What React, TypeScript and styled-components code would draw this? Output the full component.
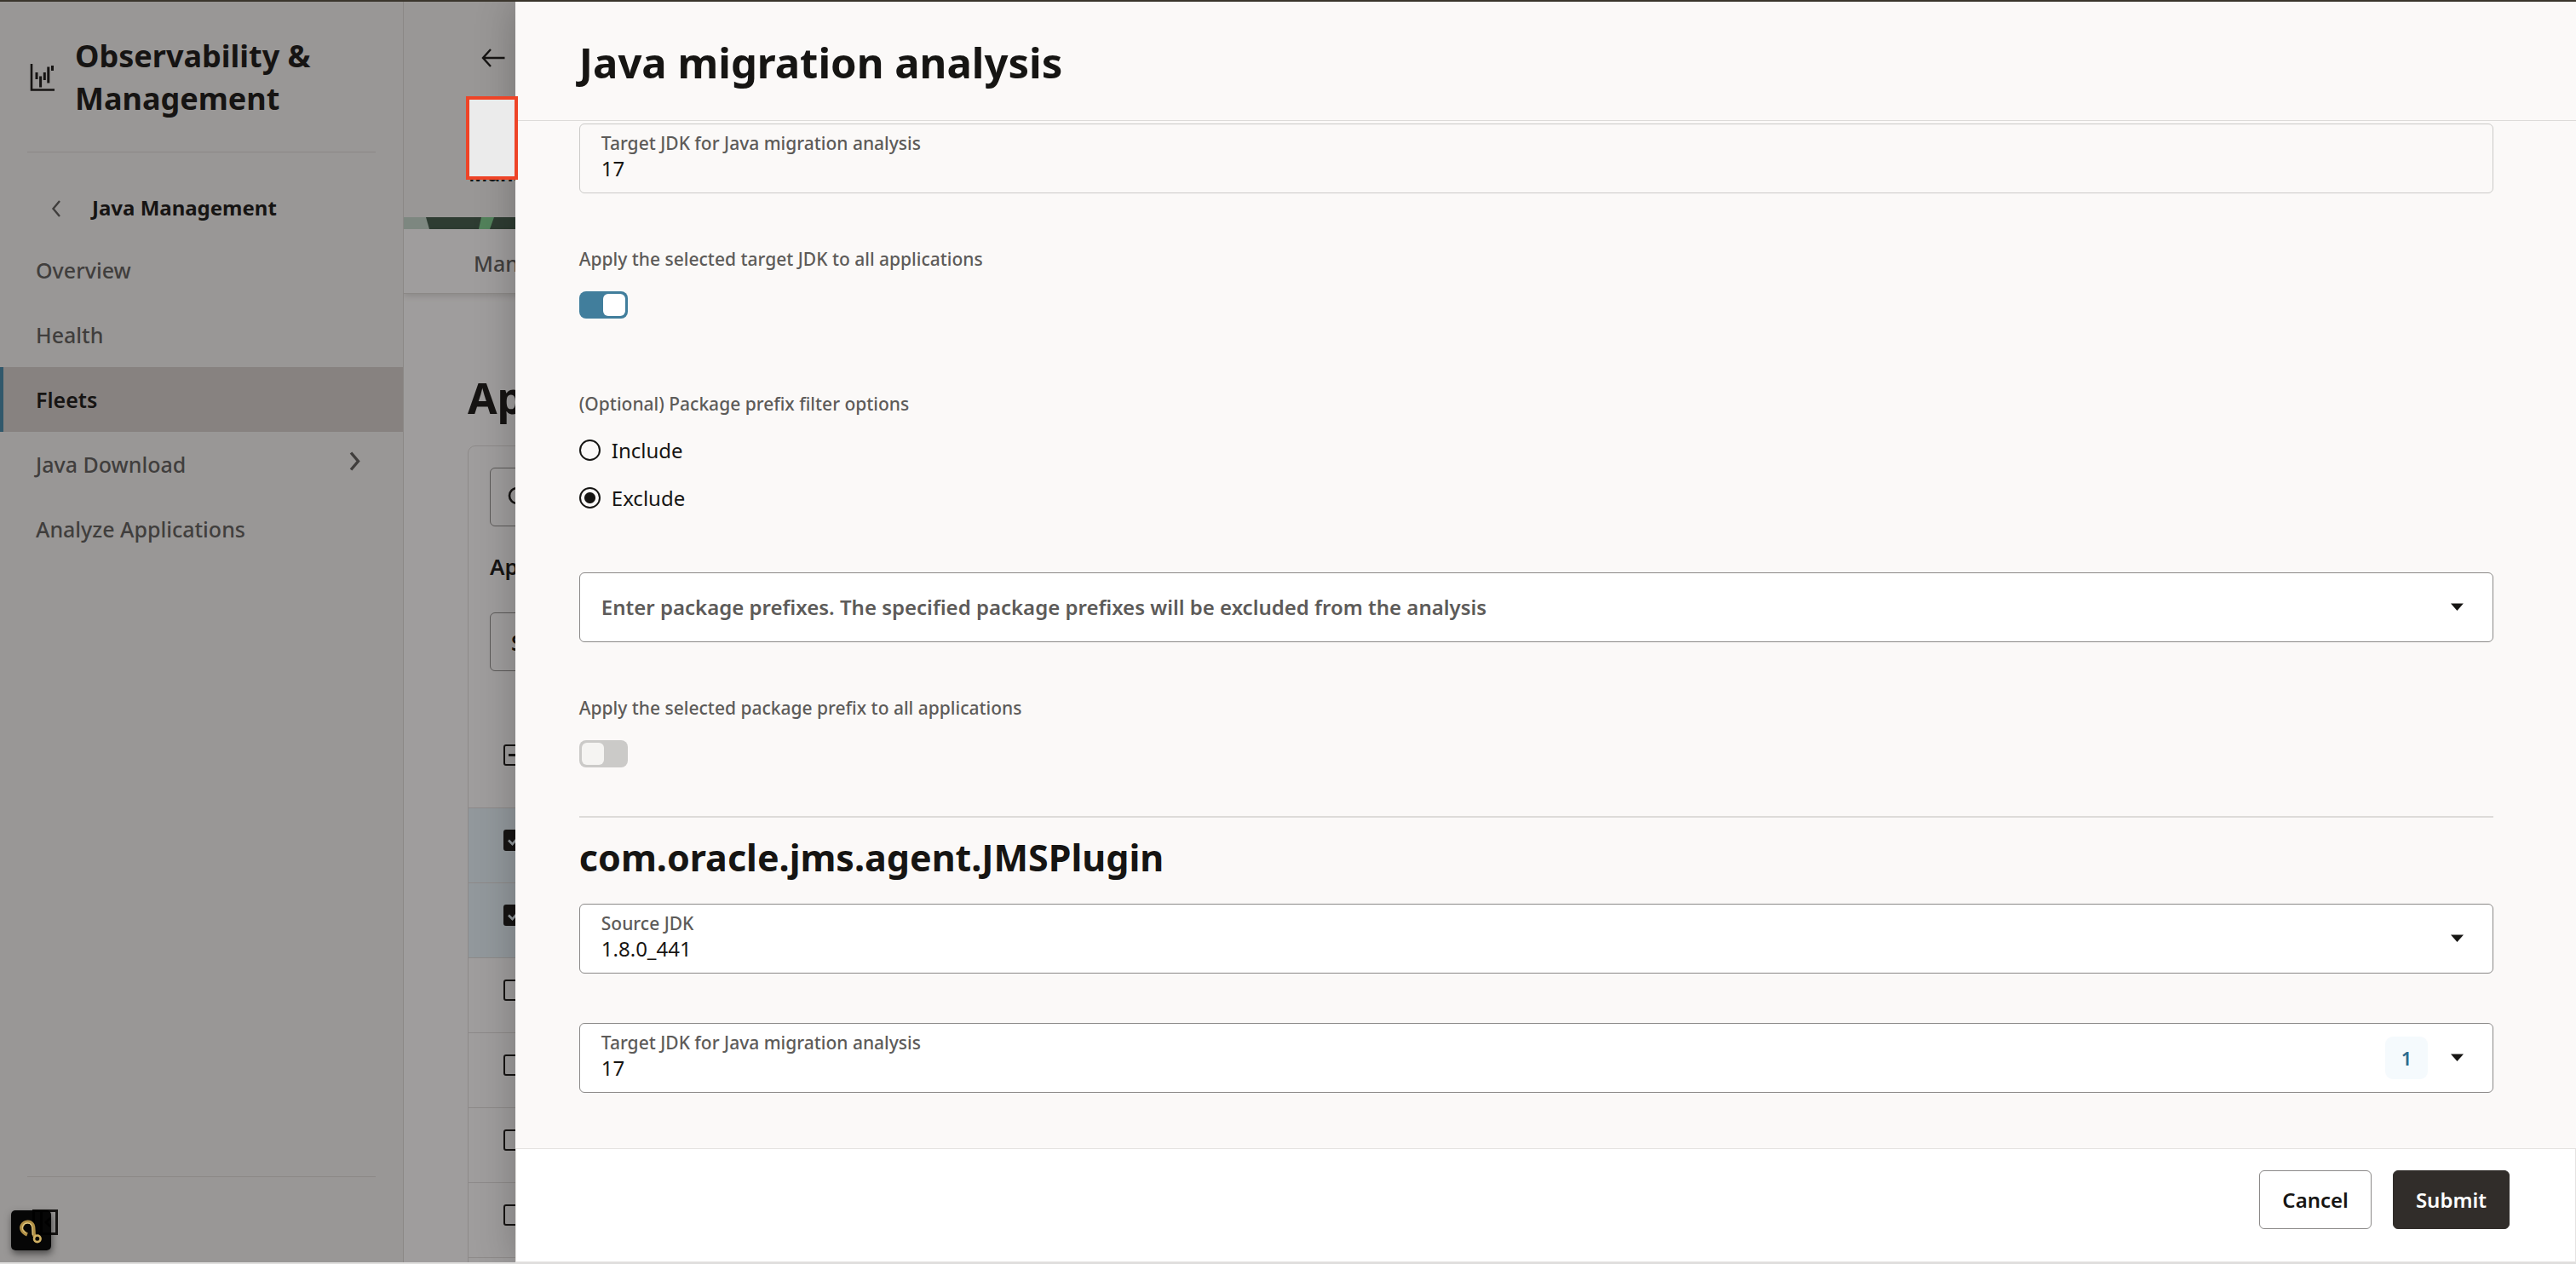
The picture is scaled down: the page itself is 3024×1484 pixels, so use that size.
import React, { useId, useState } from "react";
import styled, { createGlobalStyle, css } from "styled-components";

const ink = "#161513";
const muted = "#5d5b59";
const line = "#dddbd9";

const GlobalStyle = createGlobalStyle`
  *, *::before, *::after { box-sizing: border-box; }
  body { margin: 0; color: ${ink}; }
  body, button, input, select { font-family: "Noto Sans", "Open Sans", sans-serif; }
  h1, h2, p, fieldset, legend { margin: 0; padding: 0; }
  fieldset { border: 0; min-width: 0; }
`;

const Screen = styled.div`
  position: relative;
  display: flex;
  height: 100vh;
  overflow: hidden;
  border-top: 2px solid #3a352c;
  border-bottom: 2px solid #dfdedd;
  background: #fbf9f8;
`;

/* ---------- side navigation ---------- */

const Sidebar = styled.aside`
  display: flex;
  flex-direction: column;
  flex: 0 0 474px;
  border-right: 1px solid #d9d6d3;
  background: #f1efed;
`;

const Brand = styled.div`
  display: flex;
  align-items: center;
  gap: 20px;
  margin: 0 32px;
  padding: 39px 0 37px 2px;
  border-bottom: 1px solid #d9d6d3;
`;

const BrandName = styled.p`
  font-size: 36px;
  font-weight: 700;
  line-height: 50px;
`;

const BackLink = styled.a`
  display: flex;
  align-items: center;
  gap: 34px;
  padding: 48px 32px 18px 58px;
  color: inherit;
  font-size: 24px;
  font-weight: 700;
  line-height: 34px;
  text-decoration: none;
`;

const NavItem = styled.a<{ $active?: boolean }>`
  display: flex;
  align-items: center;
  justify-content: space-between;
  height: 76px;
  padding: 0 48px 0 38px;
  border-left: 4px solid ${(p) => (p.$active ? "#4385a6" : "transparent")};
  background: ${(p) => (p.$active ? "#d2cbc9" : "transparent")};
  color: ${(p) => (p.$active ? ink : muted)};
  font-size: 25px;
  font-weight: ${(p) => (p.$active ? 600 : 500)};
  text-decoration: none;
`;

const SidebarFooter = styled.div`
  margin: auto 32px 0;
  padding: 38px 0 32px 6px;
  border-top: 1px solid #d9d6d3;
`;

const IconButton = styled.button<{ $size: number }>`
  display: grid;
  place-items: center;
  width: ${(p) => p.$size}px;
  height: ${(p) => p.$size}px;
  padding: 0;
  border: 0;
  background: none;
  color: inherit;
`;

/* ---------- page behind the drawer ---------- */

const Main = styled.main`
  flex: 1;
  min-width: 0;
  overflow: hidden;
  background: #fbf9f8;
`;

const Page = styled.div`
  width: calc(100vw - 474px);
`;

const PageHeader = styled.header`
  height: 253px;
  padding: 37px 76px 0;
  background: #f1efed;
`;

const Crumb = styled.p`
  margin-top: 92px;
  font-size: 24px;
  font-weight: 700;
  line-height: 32px;
`;

const Banner = styled.svg`
  display: block;
  width: 100%;
  height: 14px;
  background: #3e5847;
`;

const TabBar = styled.nav`
  display: flex;
  align-items: center;
  height: 76px;
  padding: 4px 82px 0;
  border-bottom: 1px solid #d9d6d3;
  box-shadow: 0 2px 8px rgba(0, 0, 0, 0.16);
`;

const Tab = styled.a`
  color: ${muted};
  font-size: 25px;
  font-weight: 500;
  text-decoration: none;
`;

const Content = styled.div`
  padding: 89px 75px 0;
`;

const PageTitle = styled.h1`
  font-size: 50px;
  font-weight: 700;
  line-height: 66px;
`;

const Card = styled.section`
  margin-top: 23px;
  border: 1px solid #dcd9d7;
  border-radius: 9px;
`;

const Filters = styled.div`
  padding: 25px;
`;

const SearchBox = styled.label`
  display: flex;
  align-items: center;
  gap: 12px;
  height: 69px;
  padding: 0 20px;
  border: 1px solid #8b8988;
  border-radius: 6px;
  input { flex: 1; border: 0; background: none; font-size: 25px; }
`;

const FilterLabel = styled.label`
  display: block;
  margin: 30px 0 37px;
  font-size: 26px;
  font-weight: 600;
  line-height: 34px;
`;

const FilterSelect = styled.select`
  width: 100%;
  height: 69px;
  padding: 0 24px;
  appearance: none;
  border: 1px solid #8b8988;
  border-radius: 6px;
  background: none;
  color: ${ink};
  font-size: 25px;
  font-weight: 600;
`;

const AppTable = styled.table`
  width: 100%;
  border-collapse: collapse;
`;

const Row = styled.tr<{ $selected?: boolean }>`
  height: 88px;
  border-bottom: 1px solid #dcd9d7;
  background: ${(p) => (p.$selected ? "#e4f1f7" : "transparent")};
`;

const Cell = styled.td`
  padding: 0 41px 12px;
  line-height: 0;
`;

const HeadCell = styled.th`
  height: 135px;
  padding: 61px 41px 49px;
  text-align: left;
  line-height: 0;
`;

const Tick = styled.input`
  width: 25px;
  height: 25px;
  margin: 0;
  appearance: none;
  border: 2px solid ${ink};
  border-radius: 3px;
  background: none center / 25px 25px no-repeat;
  &:checked {
    background-color: ${ink};
    background-image: url("data:image/svg+xml,%3Csvg xmlns='http://www.w3.org/2000/svg' viewBox='0 0 25 25'%3E%3Cpath d='M6 12.5l4.5 4.5 8-9' fill='none' stroke='%23e4f1f7' stroke-width='2.6'/%3E%3C/svg%3E");
  }
  &[aria-checked="mixed"] {
    background-image: linear-gradient(${ink}, ${ink});
    background-size: 13px 3px;
  }
`;

const Backdrop = styled.div`
  position: absolute;
  inset: 0;
  background: rgba(22, 21, 19, 0.4);
`;

/* ---------- drawer ---------- */

const Drawer = styled.section`
  position: relative;
  z-index: 1;
  display: flex;
  flex: 0 0 80%;
  flex-direction: column;
  background: #fbf9f8;
  box-shadow: 0 0 44px rgba(0, 0, 0, 0.24);
`;

const DrawerHeader = styled.header`
  padding: 39px 75px 36px;
  border-bottom: 1px solid ${line};
`;

const DrawerTitle = styled.h2`
  font-size: 49px;
  font-weight: 700;
  line-height: 64px;
`;

const DrawerBody = styled.form`
  flex: 1;
  min-height: 0;
  overflow: hidden;
  padding: 3px 97px 0 75px;
`;

const labelText = css`
  color: ${muted};
  font-size: 21px;
  font-weight: 500;
  line-height: 28px;
`;

const Field = styled.div<{ $readOnly?: boolean; $gap?: number }>`
  display: flex;
  align-items: center;
  height: 82px;
  margin-top: ${(p) => p.$gap ?? 0}px;
  padding: 0 34px 0 25px;
  border: 1px solid ${(p) => (p.$readOnly ? "#cbcac8" : "#8b8988")};
  border-radius: 6px;
  background: ${(p) => (p.$readOnly ? "transparent" : "#fff")};
`;

const FieldText = styled.div`
  display: flex;
  flex: 1;
  flex-direction: column;
  padding-bottom: 4px;
`;

const FieldLabel = styled.label`
  ${labelText}
`;

const valueText = css`
  width: 100%;
  height: 32px;
  padding: 0;
  border: 0;
  outline: 0;
  background: none;
  color: ${ink};
  font-size: 24px;
  line-height: 32px;
`;

const TextValue = styled.input`
  ${valueText}
  &::placeholder { color: ${muted}; font-weight: 600; opacity: 1; }
`;

const SelectValue = styled.select`
  ${valueText}
  appearance: none;
`;

const Count = styled.span`
  display: grid;
  place-items: center;
  width: 50px;
  height: 50px;
  margin-right: 27px;
  border-radius: 9px;
  background: #f5fafd;
  color: #2c6b8f;
  font-size: 22px;
  font-weight: 600;
`;

const SwitchGroup = styled.div`
  display: flex;
  flex-direction: column;
  align-items: flex-start;
  gap: 24px;
  margin-top: 63px;
`;

const Switch = styled.input`
  display: flex;
  align-items: center;
  width: 57px;
  height: 32px;
  margin: 0;
  padding: 0 3px;
  appearance: none;
  border-radius: 8px;
  background: #cbcac8;
  &::before {
    content: "";
    width: 26px;
    height: 26px;
    border-radius: 6px;
    background: #f5f4f2;
  }
  &:checked { justify-content: flex-end; background: #417e9c; }
  &:checked::before { background: #fff; }
`;

const RadioGroup = styled.fieldset`
  margin-top: 86px;
`;

const RadioLegend = styled.legend`
  ${labelText}
  margin-bottom: 12px;
`;

const RadioRow = styled.label`
  display: flex;
  align-items: center;
  gap: 13px;
  height: 56px;
  font-size: 24px;
`;

const Radio = styled.input`
  width: 25px;
  height: 25px;
  margin: 0;
  appearance: none;
  border: 2px solid ${ink};
  border-radius: 50%;
  &:checked { background: radial-gradient(circle, ${ink} 6px, transparent 7px); }
`;

const AppSection = styled.section`
  margin-top: 57px;
  border-top: 2px solid ${line};
`;

const AppName = styled.h2`
  margin: 17px 0 24px;
  font-size: 43px;
  font-weight: 700;
  line-height: 60px;
`;

const DrawerFooter = styled.footer`
  display: flex;
  justify-content: flex-end;
  gap: 25px;
  padding: 25px 77px 38px;
  border: 1px solid #e5e3e1;
  background: #fff;
`;

const Button = styled.button<{ $primary?: boolean }>`
  height: 69px;
  padding: 0 26px;
  border: 1px solid ${(p) => (p.$primary ? "#312d2a" : "#8b8988")};
  border-radius: 6px;
  background: ${(p) => (p.$primary ? "#312d2a" : "#fff")};
  color: ${(p) => (p.$primary ? "#fff" : ink)};
  font-size: 24px;
  font-weight: 600;
`;

/* ---------- floating pieces ---------- */

const Callout = styled.div`
  position: absolute;
  z-index: 2;
  left: 547px;
  top: 111px;
  width: 61px;
  height: 98px;
  border: 4px solid #ee4427;
  background: #ebebeb;
`;

const HelpButton = styled.button`
  position: absolute;
  z-index: 2;
  left: 13px;
  bottom: 14px;
  width: 47px;
  height: 47px;
  padding: 0;
  border: 0;
  border-radius: 5px;
  background: rgba(0, 0, 0, 0.96);
  box-shadow: 1px 4px 9px rgba(0, 0, 0, 0.5);
`;

const BrandIcon = () => (
  <svg width="34" height="34" viewBox="0 0 34 34" fill="none" stroke={ink} aria-hidden="true">
    <path d="M3 1v30.5h27" strokeWidth="2.6" />
    <path d="M9 11v8M13.6 15.500v13M18.300 11v9M22.800 4.500v19M27.500 3v6" strokeWidth="3" />
  </svg>
);

const Caret = () => (
  <svg width="15" height="10" viewBox="0 0 15 10" aria-hidden="true">
    <path d="M0 .5h15L7.500 9z" fill={ink} />
  </svg>
);

const HookIcon = () => (
  <svg width="47" height="47" viewBox="0 0 47 47" fill="none" aria-hidden="true">
    <path d="M19 28.500c-6-2.500-8-7-6-11 2.500-5 10-5.500 12.500-.5 2 4 .5 9 1.500 12 .5 1.500 1.200 2 2 2.500" stroke="#b08f45" strokeWidth="4.200" />
    <path d="M17.500 26.500c-4-2-5-5.500-3.500-8.500 2-4 8-4 10-.5 1.800 3.500.6 8 1.500 11.500" stroke="#e2c983" strokeWidth="1.200" />
    <circle cx="30.800" cy="33.300" r="3.800" stroke="#d0b063" strokeWidth="2.600" />
  </svg>
);

const nav = ["Overview", "Health", "Fleets", "Java Download", "Analyze Applications"];
const rows = [true, true, false, false, false, false, false];

interface LabelledSwitchProps {
  label: string;
  initial: boolean;
}

const LabelledSwitch = ({ label, initial }: LabelledSwitchProps) => {
  const id = useId();
  const [on, setOn] = useState(initial);
  return (
    <SwitchGroup>
      <FieldLabel htmlFor={id}>{label}</FieldLabel>
      <Switch id={id} type="checkbox" role="switch" checked={on} onChange={() => setOn(!on)} />
    </SwitchGroup>
  );
};

interface SelectFieldProps {
  label: string;
  value: string;
  count?: number;
  gap?: number;
}

const SelectField = ({ label, value, count, gap }: SelectFieldProps) => {
  const id = useId();
  return (
    <Field $gap={gap}>
      <FieldText>
        <FieldLabel htmlFor={id}>{label}</FieldLabel>
        <SelectValue id={id} defaultValue={value}>
          <option>{value}</option>
        </SelectValue>
      </FieldText>
      {count !== undefined && <Count>{count}</Count>}
      <Caret />
    </Field>
  );
};

export default function App() {
  const [filter, setFilter] = useState("Exclude");
  return (
    <>
      <GlobalStyle />
      <Screen>
        <Sidebar>
          <Brand>
            <BrandIcon />
            <BrandName>
              Observability &amp;
              <br />
              Management
            </BrandName>
          </Brand>
          <BackLink href="#">
            <svg width="16" height="22" viewBox="0 0 16 22" fill="none" stroke={muted} strokeWidth="2.400" aria-hidden="true">
              <path d="M12 3L4.500 12l7.500 9" />
            </svg>
            Java Management
          </BackLink>
          <nav>
            {nav.map((item) => (
              <NavItem key={item} href="#" $active={item === "Fleets"}>
                {item}
                {item === "Java Download" && (
                  <svg width="16" height="32" viewBox="0 0 16 32" fill="none" stroke={muted} strokeWidth="3.400" aria-hidden="true">
                    <path d="M3 2.500L11.500 12.500 3 22.500" />
                  </svg>
                )}
              </NavItem>
            ))}
          </nav>
          <SidebarFooter>
            <IconButton $size={30} aria-label="Collapse navigation">
              <svg width="30" height="30" viewBox="0 0 30 30" fill="none" stroke={ink} strokeWidth="3" aria-hidden="true">
                <path d="M1.500 1.500h27v27h-27zM10.500 1.500v27M21 10l-5 5 5 5" />
              </svg>
            </IconButton>
          </SidebarFooter>
        </Sidebar>

        <Main>
          <Page>
            <PageHeader>
              <IconButton $size={57} aria-label="Back">
                <svg width="30" height="24" viewBox="0 0 30 24" fill="none" stroke={ink} strokeWidth="2.400" aria-hidden="true">
                  <path d="M28.500 12H3M12 2L3 12l9 10" />
                </svg>
              </IconButton>
              <Crumb>Managed</Crumb>
            </PageHeader>
            <Banner preserveAspectRatio="xMinYMin slice" viewBox="0 0 2550 14" aria-hidden="true">
              <path d="M0 0h26l4 14H0z" fill="#c2d4c8" />
              <path d="M91 0h15l-5 14H88z" fill="#7acb8b" />
            </Banner>
            <TabBar>
              <Tab href="#">Managed</Tab>
            </TabBar>
            <Content>
              <PageTitle>App</PageTitle>
              <Card>
                <Filters>
                  <SearchBox>
                    <svg width="26" height="26" viewBox="0 0 26 26" fill="none" stroke={ink} strokeWidth="2.600" aria-hidden="true">
                      <circle cx="11" cy="11" r="9" />
                      <path d="M18 18l7 7" />
                    </svg>
                    <input aria-label="Search applications" />
                  </SearchBox>
                  <FilterLabel htmlFor="app-filter">App</FilterLabel>
                  <FilterSelect id="app-filter">
                    <option>Select</option>
                  </FilterSelect>
                </Filters>
                <AppTable>
                  <thead>
                    <Row>
                      <HeadCell>
                        <Tick type="checkbox" aria-label="Select all applications" aria-checked="mixed" />
                      </HeadCell>
                    </Row>
                  </thead>
                  <tbody>
                    {rows.map((selected, i) => (
                      <Row key={i} $selected={selected}>
                        <Cell>
                          <Tick type="checkbox" aria-label={`Select application ${i + 1}`} defaultChecked={selected} />
                        </Cell>
                      </Row>
                    ))}
                  </tbody>
                </AppTable>
              </Card>
            </Content>
          </Page>
        </Main>

        <Backdrop />

        <Drawer role="dialog" aria-labelledby="drawer-title">
          <DrawerHeader>
            <DrawerTitle id="drawer-title">Java migration analysis</DrawerTitle>
          </DrawerHeader>
          <DrawerBody id="migration-form">
            <Field $readOnly>
              <FieldText>
                <FieldLabel htmlFor="target-jdk">Target JDK for Java migration analysis</FieldLabel>
                <TextValue id="target-jdk" readOnly value="17" />
              </FieldText>
            </Field>
            <LabelledSwitch label="Apply the selected target JDK to all applications" initial />
            <RadioGroup>
              <RadioLegend>(Optional) Package prefix filter options</RadioLegend>
              {["Include", "Exclude"].map((option) => (
                <RadioRow key={option}>
                  <Radio type="radio" name="prefix-filter" checked={filter === option} onChange={() => setFilter(option)} />
                  {option}
                </RadioRow>
              ))}
            </RadioGroup>
            <Field $gap={60}>
              <TextValue
                aria-label="Package prefixes"
                placeholder="Enter package prefixes. The specified package prefixes will be excluded from the analysis"
              />
              <Caret />
            </Field>
            <LabelledSwitch label="Apply the selected package prefix to all applications" initial={false} />
            <AppSection>
              <AppName>com.oracle.jms.agent.JMSPlugin</AppName>
              <SelectField label="Source JDK" value="1.8.0_441" />
              <SelectField label="Target JDK for Java migration analysis" value="17" count={1} gap={58} />
            </AppSection>
          </DrawerBody>
          <DrawerFooter>
            <Button type="button">Cancel</Button>
            <Button type="submit" form="migration-form" $primary>
              Submit
            </Button>
          </DrawerFooter>
        </Drawer>

        <Callout />
        <HelpButton aria-label="Help">
          <HookIcon />
        </HelpButton>
      </Screen>
    </>
  );
}
